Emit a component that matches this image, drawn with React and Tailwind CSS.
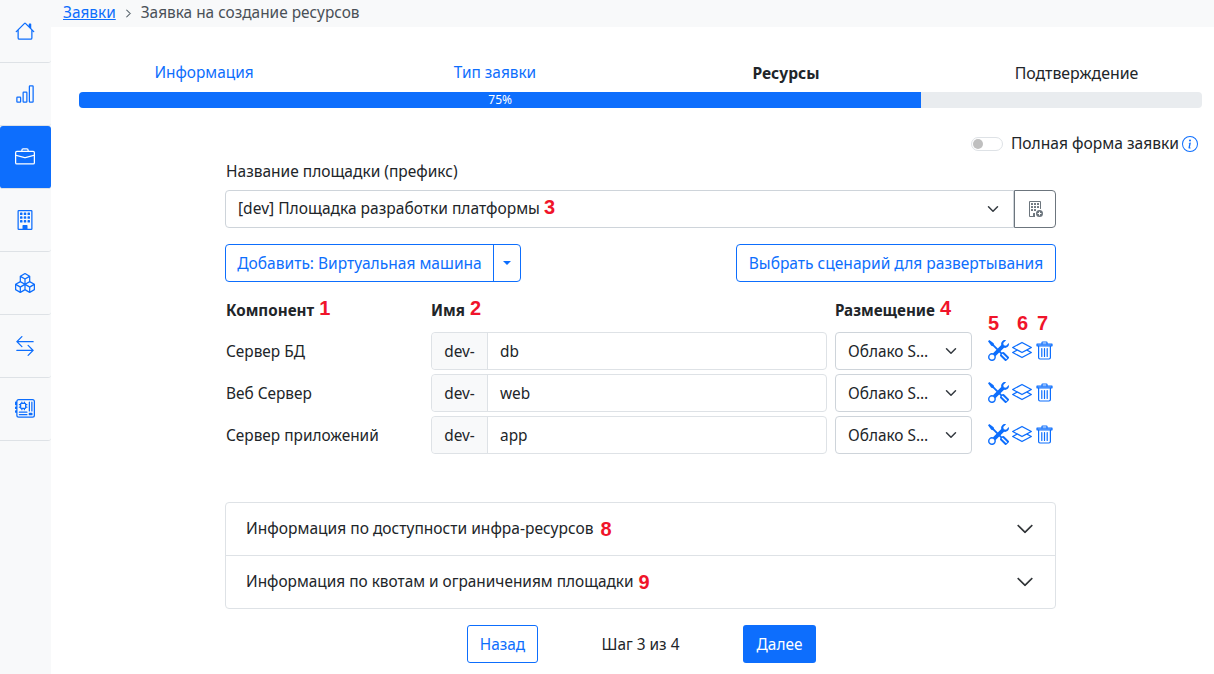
import React from "react";
import { BsHouse, BsBarChart, BsBriefcase, BsBuilding, BsBoxes, BsArrowLeftRight, BsMotherboard, BsTools, BsLayers, BsInfoCircle, BsBuildingAdd, BsChevronDown, BsChevronRight } from "react-icons/bs";

const font = { fontFamily: '"Noto Sans", sans-serif' };
const nav = [BsHouse, BsBarChart, BsBriefcase, BsBuilding, BsBoxes, BsArrowLeftRight, BsMotherboard];
const rows = [["Сервер БД", "db"], ["Веб Сервер", "web"], ["Сервер приложений", "app"]];

function Num({ children, className = "" }) {
  return <span className={"font-['Liberation_Sans',sans-serif] font-bold text-[20px] leading-none text-[#f0142a] " + className}>{children}</span>;
}

function Chevron() {
  return (
    <svg width="12" height="12" viewBox="0 0 16 16" fill="none" stroke="#343a40" strokeWidth="2" strokeLinecap="round" strokeLinejoin="round">
      <path d="m2 5 6 6 6-6" />
    </svg>
  );
}

function Bin() {
  return (
    <svg width="17" height="19" viewBox="0 0 17 19" fill="none" stroke="currentColor" strokeWidth="1.2" strokeLinecap="round" strokeLinejoin="round" className="ml-[4px]">
      <path d="M6 3V1.6C6 1.2 6.3 1 6.6 1h3.8c.3 0 .6.2.6.6V3" />
      <path d="M1 3.2h15v1.6H1z" />
      <path d="M2.6 5v11.6c0 .8.6 1.4 1.4 1.4h9c.8 0 1.4-.6 1.4-1.4V5" />
      <path d="M5.8 7.5v8M8.5 7.5v8M11.2 7.5v8" />
    </svg>
  );
}

export default function App() {
  return (
    <div className="flex h-[674px] w-[1214px] overflow-hidden bg-white text-[15.4px] text-[#212529]" style={font}>
      <aside className="w-[51px] flex-none bg-[#f8f9fa]">
        {nav.map((Icon, i) => (
          <div key={i} className={"flex h-[63px] items-center justify-center rounded-br-[3px] border-b border-[#dee2e6] " + (i === 2 ? "bg-[#0d6efd] text-white rounded-[3px]" : "text-[#0d6efd]")}>
            <Icon size={20} className="ml-[-1px]" />
          </div>
        ))}
      </aside>
      <main className="min-w-0 flex-1">
        <div className="flex h-[27px] items-start bg-[#f8f9fa] pl-3 pt-[2px] leading-[22px]">
          <span className="text-[#0d6efd] underline">Заявки</span>
          <BsChevronRight size={9} strokeWidth={1.5} className="mx-[8px] mt-[7px] text-[#6c757d]" />
          <span className="text-[#495057]">Заявка на создание ресурсов</span>
        </div>
        <div className="ml-[28px] mr-[12px] mt-[34px]">
          <div className="flex h-[22px] items-center pt-[2px] text-center leading-[22px]">
            <div className="w-[250px] text-[#0d6efd]">Информация</div>
            <div className="w-[332px] text-[#0d6efd]">Тип заявки</div>
            <div className="w-[250px] text-[15.6px] font-bold">Ресурсы</div>
            <div className="flex-1 pl-[40px] text-[15.9px]">Подтверждение</div>
          </div>
          <div className="mt-[9px] h-[16px] overflow-hidden rounded-[4px] bg-[#e9ecef]">
            <div className="h-full w-[75%] bg-[#0d6efd] text-center text-[12px] leading-[16px] text-white">75%</div>
          </div>
        </div>
        <div className="mr-[16px] mt-[25px] flex h-[22px] items-center justify-end">
          <span className="mr-[8px] h-[14px] w-[32px] rounded-full border border-[#dee2e6] bg-white">
            <span className="ml-[1px] mt-[1px] block h-[10px] w-[10px] rounded-full bg-[#bfbfbf]" />
          </span>
          <span className="text-[15.6px]">Полная форма заявки</span>
          <BsInfoCircle size={16} className="ml-[3px] text-[#0d6efd]" />
        </div>
        <div className="ml-[174px] w-[831px]">
          <div className="ml-[1px] mt-[4px] h-[24px] text-[15.5px] leading-[24px]">Название площадки (префикс)</div>
          <div className="mt-[7px] flex h-[38px]">
            <div className="flex flex-1 items-center justify-between rounded-l-[4px] border border-[#ced4da] pl-[12px] pr-[14px]">
              <span className="text-[15.55px]">[dev] Площадка разработки платформы <Num>3</Num></span>
              <Chevron />
            </div>
            <div className="flex w-[42px] items-center justify-center rounded-r-[4px] border border-[#6c757d]">
              <BsBuildingAdd size={16} className="text-[#6c757d]" />
            </div>
          </div>
          <div className="mt-[16px] flex h-[38px] justify-between pt-0 text-[15.55px] text-[#0d6efd]">
            <div className="flex rounded-[4px] border border-[#0d6efd]">
              <div className="flex w-[267px] items-center justify-center pt-[2px]">Добавить: Виртуальная машина</div>
              <div className="flex w-[27px] items-center justify-center border-l border-[#0d6efd]">
                <span className="h-0 w-0 border-x-[4px] border-t-[4px] border-x-transparent border-t-[#0d6efd]" />
              </div>
            </div>
            <div className="flex w-[320px] items-center justify-center rounded-[4px] border border-[#0d6efd] pt-[2px]">Выбрать сценарий для развертывания</div>
          </div>
          <div className="mt-[14px] flex h-[36px] items-start text-[15.2px]">
            <div className="ml-[1px] flex w-[205px] items-center gap-[5px] font-bold"><span className="leading-[28px]">Компонент</span> <Num className="mb-[5px]">1</Num></div>
            <div className="flex w-[404px] items-center gap-[5px] font-bold"><span className="leading-[28px]">Имя</span> <Num className="mb-[5px]">2</Num></div>
            <div className="flex w-[152px] items-center gap-[5px] font-bold"><span className="leading-[28px]">Размещение</span> <Num className="mb-[5px]">4</Num></div>
            <div className="relative">
              <Num className="absolute left-[1px] top-[17px]">5</Num>
              <Num className="absolute left-[30px] top-[17px]">6</Num>
              <Num className="absolute left-[50px] top-[17px]">7</Num>
            </div>
          </div>
          <div className="flex flex-col gap-[4px]">
            {rows.map(([label, name]) => (
              <div key={name} className="flex h-[38px] items-center">
                <div className="ml-[1px] w-[205px] pt-[2px]">{label}</div>
                <div className="flex h-full w-[396px] rounded-[4px] border border-[#dee2e6]">
                  <div className="flex w-[56px] items-center justify-center rounded-l-[4px] border-r border-[#dee2e6] bg-[#f8f9fa] pt-[2px]">dev-</div>
                  <div className="flex flex-1 items-center pl-[12px] pt-[2px]">{name}</div>
                </div>
                <div className="ml-[8px] flex h-full w-[137px] items-center justify-between rounded-[4px] border border-[#ced4da] pl-[12px] pr-[14px]">
                  <span className="pt-[2px]">Облако S…</span>
                  <Chevron />
                </div>
                <div className="ml-[16px] mt-[-2px] flex items-center text-[#0d6efd]">
                  <BsTools size={21} />
                  <BsLayers size={20} className="ml-[3px]" />
                  <Bin />
                </div>
              </div>
            ))}
          </div>
          <div className="mt-[48px] rounded-[4px] border border-[#dee2e6]">
            <div className="flex h-[53px] items-center justify-between border-b border-[#dee2e6] pl-[20px] pr-[21px]">
              <span className="flex items-center gap-[7px] text-[15.55px]">Информация по доступности инфра-ресурсов <Num>8</Num></span>
              <BsChevronDown size={18} strokeWidth={0.6} />
            </div>
            <div className="flex h-[52px] items-center justify-between pl-[20px] pr-[21px]">
              <span className="flex items-center gap-[5px]">Информация по квотам и ограничениям площадки <Num>9</Num></span>
              <BsChevronDown size={18} strokeWidth={0.6} />
            </div>
          </div>
          <div className="mt-[16px] flex h-[38px] items-center pl-[242px]">
            <div className="flex h-full w-[71px] items-center justify-center rounded-[3px] border border-[#0d6efd] pt-[2px] text-[#0d6efd]">Назад</div>
            <div className="w-[205px] pt-[2px] text-center">Шаг 3 из 4</div>
            <div className="flex h-full w-[73px] items-center justify-center rounded-[3px] bg-[#0d6efd] pt-[2px] text-white">Далее</div>
          </div>
        </div>
      </main>
    </div>
  );
}
